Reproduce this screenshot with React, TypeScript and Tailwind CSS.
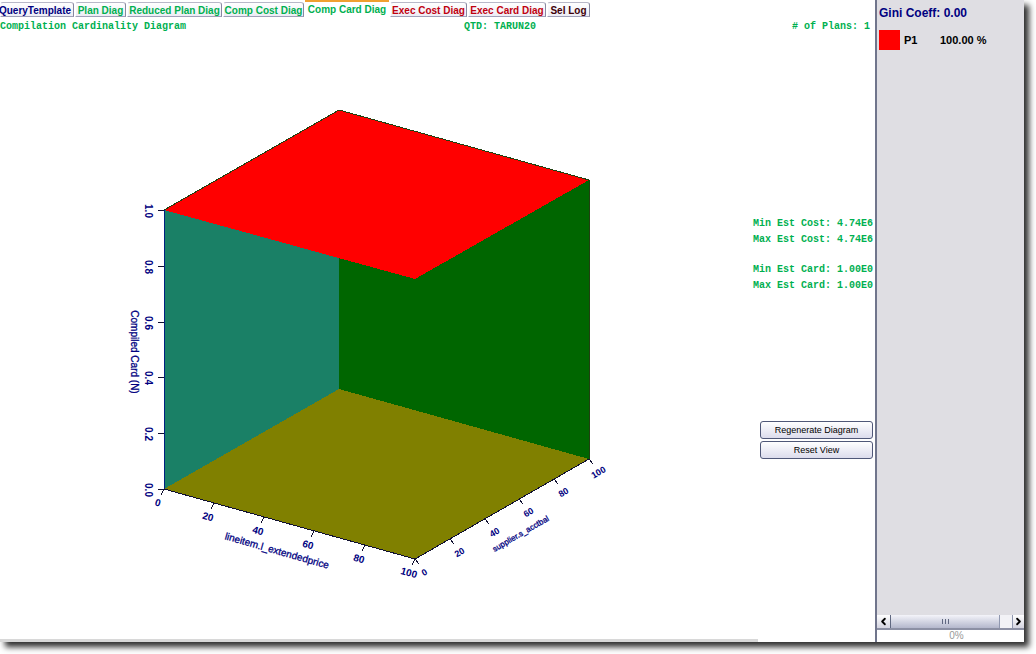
import { ChevronLeft, ChevronRight } from "lucide-react";

const tabs = [
    { name: "QueryTemplate", style: "w-[74px] pr-1 text-[#000080]" },
    { name: "Plan Diag", style: "w-[51px] text-[#00b050]" },
    { name: "Reduced Plan Diag", style: "w-[95px] text-[#00b050]" },
    { name: "Comp Cost Diag", style: "w-[81px] text-[#00b050]" },
    { name: "Comp Card Diag", style: "w-[84px] text-[#00b050]", active: true },
    { name: "Exec Cost Diag", style: "w-[77px] text-[#c00010]" },
    { name: "Exec Card Diag", style: "w-[78px] text-[#c00010]" },
    { name: "Sel Log", style: "w-[43px] text-[#400008]" },
];

const zTicks = [
    { label: "1.0", y: 210 },
    { label: "0.8", y: 266 },
    { label: "0.6", y: 322 },
    { label: "0.4", y: 377 },
    { label: "0.2", y: 433 },
    { label: "0.0", y: 489 },
];

const xTicks = [
    { label: "0", x: 164, y: 489 },
    { label: "20", x: 214, y: 503 },
    { label: "40", x: 264, y: 517 },
    { label: "60", x: 314, y: 531 },
    { label: "80", x: 365, y: 545 },
    { label: "100", x: 415, y: 559 },
];

const yTicks = [
    { label: "0", x: 415, y: 559 },
    { label: "20", x: 450, y: 539 },
    { label: "40", x: 485, y: 519 },
    { label: "60", x: 519, y: 499 },
    { label: "80", x: 554, y: 479 },
    { label: "100", x: 589, y: 459 },
];

function Tab({ name, style, active }: { name: string; style: string; active?: boolean }) {
    return (
        <button
            role="tab"
            aria-selected={active ? true : false}
            className={
                active
                    ? `${style} h-[18px] shrink-0 border-t-2 border-t-[#f0a030] bg-white text-center text-[10px] leading-[14px] font-bold whitespace-nowrap`
                    : `${style} mt-[2px] flex h-[15px] shrink-0 justify-center rounded-t-[3px] border border-l-white border-t-[#b8b8c8] border-r-[#8888a0] border-b-[#a0a0b8] bg-linear-to-b from-white to-[#ececf4] text-[10px] leading-[15px] font-bold whitespace-nowrap`
            }
        >
            {name}
        </button>
    );
}

function CardinalityChart() {
    return (
        <svg
            viewBox="0 36 758 603"
            className="h-full w-full font-['Liberation_Sans',sans-serif] text-[10px]"
            preserveAspectRatio="xMinYMin meet"
            role="img"
            aria-label="Compilation Cardinality Diagram"
        >
            <g shapeRendering="crispEdges">
                <polygon points="164,210 339,110 339,389 164,489" fill="#1a8066" />
                <polygon points="339,110 589,180 589,459 339,389" fill="#006600" />
                <polygon points="164,489 339,389 589,459 415,559" fill="#808000" />
                <polygon points="164,210 339,110 589,180 415,279" fill="#ff0000" />
            </g>
            <g fill="none" stroke="#101030" strokeWidth="1" shapeRendering="crispEdges">
                <path d="M164 210 339 110 589 180V459" stroke="#204010" />
                <path d="M164 210V489" stroke="#002080" />
                <path d="M164 489 415 559 589 459" />
                {zTicks.map((t) => (
                    <path key={t.label} d={`M158 ${t.y}H164`} />
                ))}
                {xTicks.map((t) => (
                    <path key={t.label} d={`M${t.x} ${t.y}l-3 6`} />
                ))}
                {yTicks.map((t) => (
                    <path key={t.label} d={`M${t.x} ${t.y}l4 5`} />
                ))}
            </g>
            <g fill="#000080" textAnchor="middle">
                <g className="font-bold">
                    {zTicks.map((t) => (
                        <text key={t.label} transform={`translate(145 ${t.y + 1}) rotate(90)`}>
                            {t.label}
                        </text>
                    ))}
                    {xTicks.map((t) => (
                        <text key={t.label} transform={`translate(${t.x - 7} ${t.y + 17}) rotate(16)`}>
                            {t.label}
                        </text>
                    ))}
                    {yTicks.map((t) => (
                        <text key={t.label} className="text-[9px]" transform={`translate(${t.x + 11} ${t.y + 16}) rotate(-30)`}>
                            {t.label}
                        </text>
                    ))}
                </g>
                <g stroke="#000080" strokeWidth="0.3">
                    <text transform="translate(131 352) rotate(90)">Compiled Card (N)</text>
                    <text transform="translate(276 554) rotate(16)">lineitem.l_extendedprice</text>
                    <text className="text-[8px]" transform="translate(522 536) rotate(-30)">
                        supplier.s_acctbal
                    </text>
                </g>
            </g>
        </svg>
    );
}

export default function App() {
    return (
        <div className="flex h-screen w-full overflow-hidden bg-white pr-3 pb-3 font-['Liberation_Sans',sans-serif]">
            <div className="flex min-w-0 flex-1 bg-white shadow-[5px_5px_6px_0px_#303030]">
                <main className="flex min-w-0 flex-1 flex-col border-r-2 border-[#70758c]">
                    <div role="tablist" className="flex h-[18px] shrink-0 gap-px">
                        {tabs.map((tab) => (
                            <Tab key={tab.name} {...tab} />
                        ))}
                    </div>
                    <div className="flex h-[18px] shrink-0 justify-between pr-[5px] font-['Liberation_Mono',monospace] text-[10px] leading-[18px] font-bold whitespace-nowrap text-[#00b050]">
                        <span className="flex-1">Compilation Cardinality Diagram</span>
                        <span className="pl-[130px] text-center">QTD: TARUN20</span>
                        <span className="flex-1 text-right">{"# of Plans: 1"}</span>
                    </div>
                    <div className="flex min-h-0 flex-1">
                        <div className="flex min-w-0 flex-1 flex-col">
                            <div className="min-h-0 flex-1">
                                <CardinalityChart />
                            </div>
                            <div className="h-[3px] shrink-0 bg-[#d8d8d8]" />
                        </div>
                        <div className="flex w-[117px] shrink-0 flex-col pt-[180px] pr-[2px]">
                            <div className="flex flex-col items-end font-['Liberation_Mono',monospace] text-[10px] leading-4 font-bold whitespace-nowrap text-[#00b050]">
                                <p>Min Est Cost: 4.74E6</p>
                                <p>Max Est Cost: 4.74E6</p>
                                <p className="mt-[14px]">Min Est Card: 1.00E0</p>
                                <p>Max Est Card: 1.00E0</p>
                            </div>
                            <div className="mt-[127px] flex flex-col gap-[2px] pl-[2px]">
                                <button className="h-[18px] rounded-[3px] border border-[#505878] bg-linear-to-b from-white to-[#dcdcec] text-[9px] leading-4 text-black">
                                    Regenerate Diagram
                                </button>
                                <button className="h-[18px] rounded-[3px] border border-[#505878] bg-linear-to-b from-white to-[#dcdcec] text-[9px] leading-4 text-black">
                                    Reset View
                                </button>
                            </div>
                        </div>
                    </div>
                </main>
                <aside className="flex w-[147px] shrink-0 flex-col bg-[#dfdee3]">
                    <h2 className="pt-1 pl-[2px] text-[12px] leading-[18px] font-bold text-[#000080]">Gini Coeff: 0.00</h2>
                    <div className="mt-[7px] flex items-center pl-[2px] text-[11px] leading-5 font-bold text-black">
                        <span className="h-5 w-[21px] bg-[#ff0000]" />
                        <span className="w-10 pt-px pl-1">P1</span>
                        <span className="pt-px">100.00 %</span>
                    </div>
                    <div className="mt-auto flex h-[15px] shrink-0 border-b-2 border-[#8c90a4] bg-[#f2f2f6]">
                        <button aria-label="Scroll left" className="flex w-[14px] items-center justify-center border-r border-[#606880] bg-linear-to-b from-white to-[#d4d4e0]">
                            <ChevronLeft size={11} strokeWidth={4} />
                        </button>
                        <div className="flex-1 pr-3">
                            <div className="flex h-full items-center justify-center gap-[2px] border-r border-[#9098b0] bg-linear-to-b from-[#f4f4fa] to-[#b4b8cc]">
                                <span className="h-[5px] w-px bg-[#606880]" />
                                <span className="h-[5px] w-px bg-[#606880]" />
                                <span className="h-[5px] w-px bg-[#606880]" />
                            </div>
                        </div>
                        <button aria-label="Scroll right" className="flex w-[12px] items-center justify-center border-l border-[#9098b0] bg-linear-to-b from-white to-[#d4d4e0]">
                            <ChevronRight size={11} strokeWidth={4} />
                        </button>
                    </div>
                    <div role="progressbar" aria-valuenow={0} className="h-3 shrink-0 bg-white pl-3 text-center text-[10px] leading-3 text-[#999999]">
                        0%
                    </div>
                </aside>
            </div>
        </div>
    );
}
